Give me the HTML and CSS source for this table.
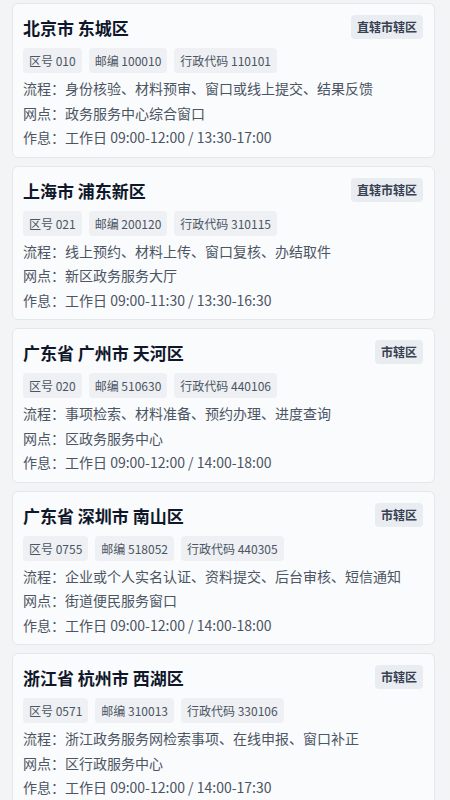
FILE: index.html
```html
<!DOCTYPE html>
<html lang="zh-CN">
<head>
    <meta charset="utf-8">
    <title>办事网点</title>
    <link rel="stylesheet" href="styles.css">
</head>
<body>
<div class="list">

    <div class="card">
        <div class="card-head">
            <h2 class="place">北京市 东城区</h2>
            <span class="level">直辖市辖区</span>
        </div>
        <div class="chips">
            <span class="chip">区号 010</span>
            <span class="chip">邮编 100010</span>
            <span class="chip">行政代码 110101</span>
        </div>
        <p class="row">流程：身份核验、材料预审、窗口或线上提交、结果反馈</p>
        <p class="row">网点：政务服务中心综合窗口</p>
        <p class="row">作息：工作日 09:00-12:00 / 13:30-17:00</p>
    </div>

    <div class="card">
        <div class="card-head">
            <h2 class="place">上海市 浦东新区</h2>
            <span class="level">直辖市辖区</span>
        </div>
        <div class="chips">
            <span class="chip">区号 021</span>
            <span class="chip">邮编 200120</span>
            <span class="chip">行政代码 310115</span>
        </div>
        <p class="row">流程：线上预约、材料上传、窗口复核、办结取件</p>
        <p class="row">网点：新区政务服务大厅</p>
        <p class="row">作息：工作日 09:00-11:30 / 13:30-16:30</p>
    </div>

    <div class="card">
        <div class="card-head">
            <h2 class="place">广东省 广州市 天河区</h2>
            <span class="level">市辖区</span>
        </div>
        <div class="chips">
            <span class="chip">区号 020</span>
            <span class="chip">邮编 510630</span>
            <span class="chip">行政代码 440106</span>
        </div>
        <p class="row">流程：事项检索、材料准备、预约办理、进度查询</p>
        <p class="row">网点：区政务服务中心</p>
        <p class="row">作息：工作日 09:00-12:00 / 14:00-18:00</p>
    </div>

    <div class="card">
        <div class="card-head">
            <h2 class="place">广东省 深圳市 南山区</h2>
            <span class="level">市辖区</span>
        </div>
        <div class="chips">
            <span class="chip">区号 0755</span>
            <span class="chip">邮编 518052</span>
            <span class="chip">行政代码 440305</span>
        </div>
        <p class="row">流程：企业或个人实名认证、资料提交、后台审核、短信通知</p>
        <p class="row">网点：街道便民服务窗口</p>
        <p class="row">作息：工作日 09:00-12:00 / 14:00-18:00</p>
    </div>

    <div class="card">
        <div class="card-head">
            <h2 class="place">浙江省 杭州市 西湖区</h2>
            <span class="level">市辖区</span>
        </div>
        <div class="chips">
            <span class="chip">区号 0571</span>
            <span class="chip">邮编 310013</span>
            <span class="chip">行政代码 330106</span>
        </div>
        <p class="row">流程：浙江政务服务网检索事项、在线申报、窗口补正</p>
        <p class="row">网点：区行政服务中心</p>
        <p class="row">作息：工作日 09:00-12:00 / 14:00-17:30</p>
    </div>

</div>
</body>
</html>
```

FILE: styles.css
```css
body {
    margin: 0;
    background-color: #f3f4f6;
    font-family: "Noto Sans CJK SC", "Noto Sans", sans-serif;
    color: #4b5563;
}

.list {
    display: flex;
    flex-direction: column;
    gap: 8px;
    padding: 3px 15px 0 12px;
}

.card {
    background-color: #fafbfc;
    border: 1px solid #e5e7eb;
    border-radius: 6px;
    padding: 11px 11px 7px 10px;
}

.card-head {
    display: flex;
    justify-content: space-between;
    align-items: flex-start;
}

.place {
    margin: 0;
    font-size: 17px;
    line-height: 26px;
    font-weight: 700;
    color: #0f172a;
}

.level {
    height: 24px;
    line-height: 24px;
    padding: 0 6px;
    font-size: 12px;
    font-weight: 700;
    color: #374151;
    background-color: #e9ecf0;
    border-radius: 4px;
}

.chips {
    display: flex;
    gap: 7px;
    margin-top: 7px;
    margin-bottom: 3px;
}

.chip {
    height: 25px;
    line-height: 25px;
    padding: 0 6px;
    font-size: 12px;
    color: #4b5563;
    background-color: #eef0f3;
    border-radius: 4px;
}

.row {
    margin: 0;
    font-size: 14px;
    line-height: 24.5px;
    color: #4b5563;
}
```
